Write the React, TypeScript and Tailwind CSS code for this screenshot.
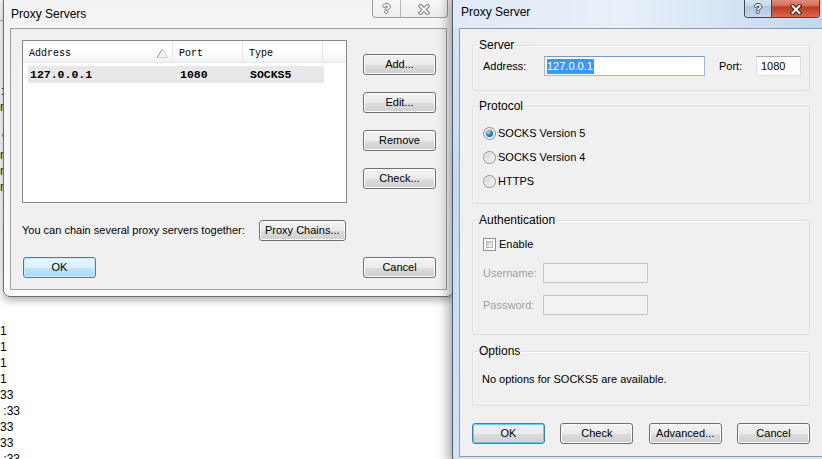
import type { ReactNode } from 'react'

const BTN =
  'flex items-center justify-center h-[21px] rounded-[3px] border text-[11px] text-black leading-none'
const BTN_NORMAL =
  'border-[#707070] bg-[linear-gradient(to_bottom,#f2f2f2_0%,#ebebeb_50%,#dddddd_51%,#cfcfcf_100%)] shadow-[inset_0_0_0_1px_#fcfcfc]'
const BTN_DEFAULT =
  'border-[#3c7fb1] bg-[linear-gradient(to_bottom,#eaf6fd_0%,#d9f0fc_50%,#bee6fd_51%,#a7d9f5_100%)] shadow-[inset_0_0_0_1px_#c8ecfc]'
const BTN_FOCUS =
  'border-[#3c7fb1] bg-[linear-gradient(to_bottom,#f2f2f2_0%,#ebebeb_50%,#dddddd_51%,#cfcfcf_100%)] shadow-[inset_0_0_0_1px_#5fd0f5]'

function Button({
  children,
  variant = 'normal',
  className = 'w-[73px]',
}: {
  children: ReactNode
  variant?: 'normal' | 'default' | 'focus'
  className?: string
}) {
  const look = variant === 'default' ? BTN_DEFAULT : variant === 'focus' ? BTN_FOCUS : BTN_NORMAL
  return <div className={`${BTN} ${look} ${className}`}>{children}</div>
}

function XGlyph({ outline, fill }: { outline: string; fill: string }) {
  return (
    <svg width="12" height="11" viewBox="0 0 12 11">
      <path d="M2.5 2 L9.5 9 M9.5 2 L2.5 9" stroke={outline} strokeWidth="4" strokeLinecap="square" />
      <path d="M2.5 2 L9.5 9 M9.5 2 L2.5 9" stroke={fill} strokeWidth="2" strokeLinecap="square" />
    </svg>
  )
}

function Radio({ checked }: { checked?: boolean }) {
  return (
    <span className="flex items-center justify-center w-[13px] h-[13px] rounded-full border border-[#8e8f8f] bg-[linear-gradient(135deg,#cfcfcf,#fafafa)] shadow-[inset_0_0_0_1px_#f2f2f2]">
      {checked && (
        <span className="w-[7px] h-[7px] rounded-full bg-[radial-gradient(circle_at_35%_30%,#a6e0ff_0%,#2b80cf_50%,#0b3f7a_100%)]" />
      )}
    </span>
  )
}

function Group({ title, children, className = '' }: { title: string; children: ReactNode; className?: string }) {
  return (
    <fieldset className={`border border-[#d5dfe5] rounded-[3px] shadow-[inset_1px_1px_0_#ffffff] ${className}`}>
      <legend className="ml-[5px] px-[1px] leading-[15px] text-[12px]">{title}</legend>
      {children}
    </fieldset>
  )
}

function ProxyServers() {
  return (
    <div className="absolute left-[3px] top-[-6px] w-[451px] h-[303px] rounded-[7px] border border-[#6f6f6f] bg-[linear-gradient(to_bottom,#f3f3f3,#fbfbfb)] shadow-[0_3px_8px_rgba(0,0,0,0.35)] flex flex-col px-[6px] pb-[6px]">
      {/* title bar */}
      <div className="-mx-[6px] h-[33px] flex items-start">
        <span className="pl-[7px] pt-[12px] text-[12px] leading-[15px]">Proxy Servers</span>
        <div className="ml-auto mr-[5px] flex h-[23px] rounded-b-[4px] border border-t-0 border-[#9c9c9c] bg-[linear-gradient(to_bottom,#fafafa,#eeeeee)]">
          <div className="w-[28px] flex items-center justify-center pt-[6px] border-r border-[#b8b8b8] text-[13px] leading-[14px] font-bold text-white [text-shadow:1px_0_0_#777,-1px_0_0_#777,0_1px_0_#777,0_-1px_0_#777]">
            ?
          </div>
          <div className="w-[46px] flex items-center justify-center pt-[6px]">
            <XGlyph outline="#7a7a7a" fill="#f4f4f4" />
          </div>
        </div>
      </div>

      {/* client */}
      <div className="flex-1 border border-[#a0a0a0] bg-[#f0f0f0] pt-[11px] pl-[11px] pr-[10px] flex flex-col">
        <div className="flex justify-between">
          <div className="w-[325px] h-[163px] border border-[#828790] bg-white font-['Liberation_Mono',monospace]">
            <div className="flex h-[22px] bg-[linear-gradient(to_bottom,#ffffff_0%,#ffffff_45%,#f1f2f4_100%)] border-b border-[#e5e5e5] text-[10px]">
              <div className="relative w-[150px] flex items-center pl-[6px] pt-[3px] border-r border-[#e5e5e5]">
                Address
                <svg className="absolute left-[133px] top-[7px]" width="12" height="10" viewBox="0 0 12 10">
                  <path d="M1 9.5 L6.5 1" stroke="#8a8a8a" strokeWidth="1" fill="none" />
                  <path d="M6.5 1 L11.5 9.5 L1 9.5" stroke="#cfcfcf" strokeWidth="1" fill="none" />
                </svg>
              </div>
              <div className="w-[70px] flex items-center pl-[6px] pt-[3px] border-r border-[#e5e5e5]">Port</div>
              <div className="w-[80px] flex items-center pl-[6px] pt-[3px] border-r border-[#e5e5e5]">Type</div>
            </div>
            <div className="mt-[3px] ml-[5px] w-[296px] h-[17px] flex items-center bg-[#e8e8e8] text-[11.5px] font-bold">
              <span className="w-[150px] pl-[2px]">127.0.0.1</span>
              <span className="w-[70px] pl-[2px]">1080</span>
              <span className="pl-[2px]">SOCKS5</span>
            </div>
          </div>
          <div className="flex flex-col gap-[17px] pt-[14px]">
            <Button>Add...</Button>
            <Button>Edit...</Button>
            <Button>Remove</Button>
            <Button>Check...</Button>
          </div>
        </div>

        <div className="mt-[17px] flex items-center gap-[14px] text-[11px]">
          <span>You can chain several proxy servers together:</span>
          <Button className="w-[87px]">Proxy Chains...</Button>
        </div>

        <div className="mt-[16px] flex justify-between">
          <Button variant="default" className="w-[73px] ml-[1px]">
            OK
          </Button>
          <Button>Cancel</Button>
        </div>
      </div>
    </div>
  )
}

function ProxyServer() {
  return (
    <div className="absolute left-[452px] top-[-8px] w-[378px] h-[472px] rounded-[7px] border border-[#4b586a] bg-[linear-gradient(to_bottom,#d9e6f4,#c6daf0_40%,#d3e3f4)] shadow-[-4px_2px_12px_rgba(0,0,0,0.35)] flex flex-col px-[6px] pb-[6px]">
      {/* title bar */}
      <div className="-mx-[6px] h-[35px] flex items-start rounded-t-[6px] bg-[linear-gradient(to_right,#e0ebf7_0%,#e8f0f9_45%,#c2d7ee_100%)]">
        <span className="pl-[8px] pt-[12px] text-[12px] leading-[15px]">Proxy Server</span>
        <div className="ml-auto mr-[9px] flex h-[25px] rounded-b-[4px] border border-t-0 border-[#3a475b] overflow-hidden">
          <div className="w-[27px] flex items-center justify-center pt-[8px] border-r border-[#3a475b] bg-[linear-gradient(to_bottom,#e3ecf6_0%,#c9d8e9_55%,#b3c7df_56%,#c7d7ea_100%)] text-[13px] leading-[14px] font-bold text-white [text-shadow:1px_0_0_#35435a,-1px_0_0_#35435a,0_1px_0_#35435a,0_-1px_0_#35435a]">
            ?
          </div>
          <div className="w-[47px] flex items-center justify-center pt-[8px] bg-[linear-gradient(to_bottom,#eab2a4_0%,#d9735e_50%,#c23c22_60%,#d56a4f_100%)]">
            <XGlyph outline="#3a1c16" fill="#ffffff" />
          </div>
        </div>
      </div>

      {/* client */}
      <div className="flex-1 border border-[#8c9cb0] bg-[#f0f0f0] px-[12px] pt-[9px] flex flex-col text-[11px]">
        <Group title="Server">
          <div className="pl-[10px] pt-[3px] pb-[14px] flex items-center">
            <span className="w-[61px]">Address:</span>
            <div className="w-[161px] h-[20px] border border-[#9cb9d8] border-t-[#6f9cc6] bg-white pl-[2px] flex items-center">
              <span className="bg-[#3399ff] text-white leading-[15px] pr-[1px]">127.0.0.1</span>
            </div>
            <span className="ml-[14px] w-[37px]">Port:</span>
            <div className="w-[45px] h-[20px] border border-[#dbdfe6] border-t-[#abadb3] bg-white pl-[4px] flex items-center">
              1080
            </div>
          </div>
        </Group>

        <Group title="Protocol" className="mt-[8px]">
          <div className="pl-[10px] pt-[7px] pb-[10px] flex flex-col">
            {['SOCKS Version 5', 'SOCKS Version 4', 'HTTPS'].map((label, i) => (
              <div key={label} className="h-[24px] flex items-center gap-[2px]">
                <Radio checked={i === 0} />
                <span>{label}</span>
              </div>
            ))}
          </div>
        </Group>

        <Group title="Authentication" className="mt-[9px]">
          <div className="pl-[10px] pt-[6px] pb-[19px] flex flex-col">
            <div className="h-[20px] flex items-center gap-[2px]">
              <span className="w-[13px] h-[13px] border border-[#8e8f8f] bg-white p-[2px]">
                <span className="block w-full h-full border border-[#b4b8be] bg-[linear-gradient(135deg,#cdcdcd,#f7f7f7)]" />
              </span>
              <span className="ml-[1px]">Enable</span>
            </div>
            <div className="mt-[9px] flex items-center text-[#a0a0a0]">
              <span className="w-[60px]">Username:</span>
              <div className="w-[105px] h-[20px] border border-[#c5c5c5] bg-[#f2f2f2]" />
            </div>
            <div className="mt-[12px] flex items-center text-[#a0a0a0]">
              <span className="w-[60px]">Password:</span>
              <div className="w-[105px] h-[20px] border border-[#c5c5c5] bg-[#f2f2f2]" />
            </div>
          </div>
        </Group>

        <Group title="Options" className="mt-[9px]">
          <div className="pl-[9px] pt-[13px] pb-[18px] leading-[15px]">No options for SOCKS5 are available.</div>
        </Group>

        <div className="mt-[17px] flex justify-between">
          <Button variant="focus">OK</Button>
          <Button>Check</Button>
          <Button>Advanced...</Button>
          <Button>Cancel</Button>
        </div>
      </div>
    </div>
  )
}

export default function App() {
  return (
    <div className="relative w-[822px] h-[459px] overflow-hidden bg-white text-black font-['Liberation_Sans',Arial,sans-serif]">
      {/* a window behind, only its edge shows */}
      <div className="absolute left-[-40px] top-[20px] w-[44px] border-t border-[#a8a8a8] pt-[62px] text-[12px] leading-[16px] text-right text-[#222]">
        <div>:</div>
        <div>r</div>
        <div>&nbsp;</div>
        <div>'</div>
        <div>r</div>
        <div>r</div>
        <div>r</div>
      </div>

      {/* desktop text below the windows */}
      <div className="pt-[323px] text-[12px] leading-[16px]">
        <div>1</div>
        <div>1</div>
        <div>1</div>
        <div>1</div>
        <div>33</div>
        <div>&nbsp;:33</div>
        <div>33</div>
        <div>33</div>
        <div>&nbsp;:33</div>
      </div>

      <ProxyServers />
      <ProxyServer />
    </div>
  )
}
